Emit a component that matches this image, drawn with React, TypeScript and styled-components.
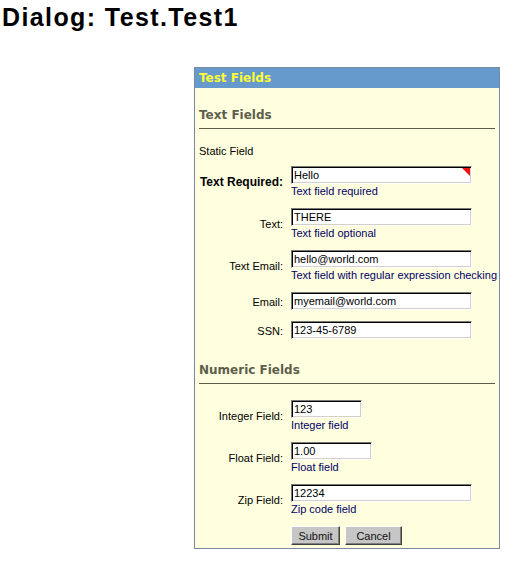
import React from "react";
import styled, { createGlobalStyle } from "styled-components";

const Global = createGlobalStyle`
  html, body { margin: 0; padding: 0; background: #ffffff; }
  body { font-family: "Liberation Sans", Arial, sans-serif; }
`;

const Page = styled.div`
  padding: 3px 0 0 2px;
`;

const PageTitle = styled.h1`
  margin: 0;
  font-family: "Liberation Sans", Arial, sans-serif;
  font-weight: bold;
  font-size: 25px;
  letter-spacing: 1.4px;
  line-height: 28px;
  color: #000;
`;

const Panel = styled.div`
  margin: 36px 0 0 192px;
  width: 304px;
  border: 1px solid #7b8aa3;
  background: #ffffdf;
  font-family: "Liberation Sans", Tahoma, sans-serif;
  font-size: 11px;
`;

const PanelHeader = styled.div`
  height: 20px;
  line-height: 20px;
  background: #6699cc;
  color: #ffff33;
  font-family: "DejaVu Sans", Verdana, sans-serif;
  font-weight: bold;
  font-size: 12px;
  padding-left: 4px;
`;

const PanelBody = styled.div`
  padding: 0 4px 3px 4px;
`;

const SectionTitle = styled.div<{ $top: number }>`
  margin-top: ${(p) => p.$top}px;
  padding: 0 0 6px 0;
  border-bottom: 1px solid #5c5c48;
  color: #5e5e4c;
  font-family: "DejaVu Sans", Verdana, sans-serif;
  font-weight: bold;
  font-size: 12px;
  line-height: 14px;
`;

const StaticText = styled.div`
  margin: 15px 0 8px 0;
  line-height: 14px;
  color: #000;
`;

const FormGrid = styled.div<{ $top?: number }>`
  display: grid;
  grid-template-columns: 84px 1fr;
  column-gap: 8px;
  row-gap: 10px;
  align-items: center;
  margin-top: ${(p) => p.$top ?? 0}px;
`;

const Label = styled.div<{ $bold?: boolean }>`
  text-align: right;
  color: #000;
  font-weight: ${(p) => (p.$bold ? "bold" : "normal")};
  font-size: ${(p) => (p.$bold ? "12px" : "11px")};
  white-space: nowrap;
`;

const FieldCell = styled.div<{ $tail: number }>`
  display: flex;
  flex-direction: column;
  align-items: flex-start;
  padding-bottom: ${(p) => p.$tail}px;
`;

const InputWrap = styled.div`
  position: relative;
  display: inline-block;
`;

const Input = styled.input<{ $w: number }>`
  box-sizing: border-box;
  width: ${(p) => p.$w}px;
  height: 18px;
  margin: 0;
  padding: 0 0 0 2px;
  border: 1px solid;
  border-color: #7a7a7a #ffffff #ffffff #7a7a7a;
  box-shadow: inset 1px 1px 0 #000, inset -1px -1px 0 #d4d0c8;
  background: #ffffff;
  font-family: "Liberation Sans", Arial, sans-serif;
  font-size: 11px;
  color: #000;
  outline: none;
`;

const RequiredMark = styled.span`
  position: absolute;
  top: 2px;
  right: 2px;
  width: 0;
  height: 0;
  border-top: 8px solid #ee1111;
  border-left: 8px solid transparent;
`;

const Hint = styled.div`
  padding-top: 1px;
  color: #000066;
  line-height: 13px;
  white-space: nowrap;
`;

const Buttons = styled.div`
  display: flex;
  gap: 5px;
`;

const Button = styled.button<{ $w: number }>`
  box-sizing: border-box;
  width: ${(p) => p.$w}px;
  height: 19px;
  padding: 0;
  background: #c6c6c6;
  border: 1px solid;
  border-color: #ffffff #404040 #404040 #ffffff;
  box-shadow: inset -1px -1px 0 #808080;
  font-family: "Liberation Sans", Tahoma, sans-serif;
  font-size: 11px;
  color: #111;
`;

type Row = {
  label: string;
  value: string;
  width: number;
  hint?: string;
  bold?: boolean;
  required?: boolean;
};

const textRows: Row[] = [
  { label: "Text Required:", value: "Hello", width: 181, hint: "Text field required", bold: true, required: true },
  { label: "Text:", value: "THERE", width: 181, hint: "Text field optional" },
  { label: "Text Email:", value: "hello@world.com", width: 181, hint: "Text field with regular expression checking" },
  { label: "Email:", value: "myemail@world.com", width: 181 },
  { label: "SSN:", value: "123-45-6789", width: 181 },
];

const numericRows: Row[] = [
  { label: "Integer Field:", value: "123", width: 71, hint: "Integer field" },
  { label: "Float Field:", value: "1.00", width: 81, hint: "Float field" },
  { label: "Zip Field:", value: "12234", width: 181, hint: "Zip code field" },
];

function FieldRow({ row }: { row: Row }) {
  return (
    <>
      <Label $bold={row.bold}>{row.label}</Label>
      <FieldCell $tail={row.hint ? 0 : 1}>
        <InputWrap>
          <Input $w={row.width} defaultValue={row.value} />
          {row.required && <RequiredMark />}
        </InputWrap>
        {row.hint && <Hint>{row.hint}</Hint>}
      </FieldCell>
    </>
  );
}

export default function App() {
  return (
    <Page>
      <Global />
      <PageTitle>Dialog: Test.Test1</PageTitle>
      <Panel>
        <PanelHeader>Test Fields</PanelHeader>
        <PanelBody>
          <SectionTitle $top={20}>Text Fields</SectionTitle>
          <StaticText>Static Field</StaticText>
          <FormGrid>
            {textRows.map((r) => (
              <FieldRow key={r.label} row={r} />
            ))}
          </FormGrid>
          <SectionTitle $top={23}>Numeric Fields</SectionTitle>
          <FormGrid $top={16}>
            {numericRows.map((r) => (
              <FieldRow key={r.label} row={r} />
            ))}
            <div />
            <Buttons>
              <Button $w={49}>Submit</Button>
              <Button $w={57}>Cancel</Button>
            </Buttons>
          </FormGrid>
        </PanelBody>
      </Panel>
    </Page>
  );
}
